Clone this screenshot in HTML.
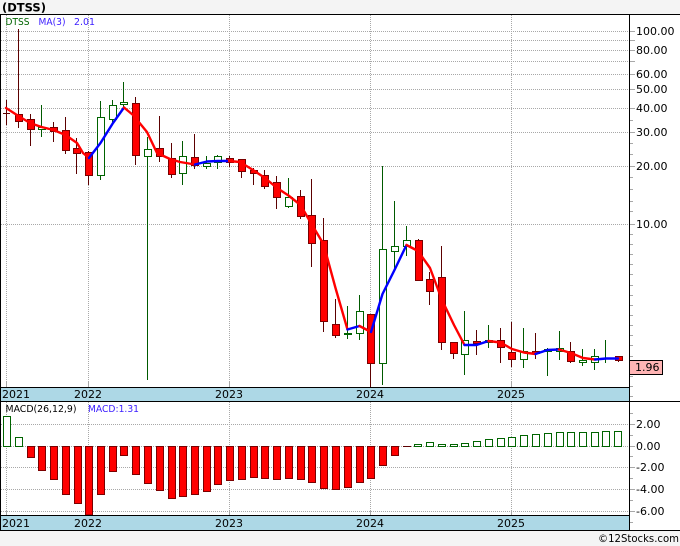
<!DOCTYPE html>
<html>
<head>
<meta charset="utf-8">
<style>
html,body{margin:0;padding:0;background:#f4f4f4;width:680px;height:546px;overflow:hidden}
svg{display:block}
text{font-family:"DejaVu Sans",sans-serif;font-size:11px;fill:#000}
.s{font-size:9.5px}
</style>
</head>
<body>
<svg width="680" height="546" viewBox="0 0 680 546" xmlns="http://www.w3.org/2000/svg">
<rect x="0" y="0" width="680" height="546" fill="#f4f4f4"/>
<rect x="0" y="14" width="680" height="516" fill="#fff"/>

<!-- grid -->
<g shape-rendering="crispEdges" fill="none" stroke="#a8a8a8">
<path stroke-dasharray="1 1" d="M1 31.5H630M1 40.5H630M1 50.5H630M1 61.5H630M1 74.5H630M1 89.5H630M1 108.5H630M1 132.5H630M1 166.5H630M1 224.5H630"/>
<path stroke-dasharray="1 1" d="M6.5 15V382M88.5 15V382M229.5 15V382M370.5 15V382M511.5 15V382"/>
<path stroke-dasharray="1 1" d="M1 424.5H630M1 446.5H630M1 467.5H630M1 489.5H630M1 511.5H630"/>
<path stroke-dasharray="1 1" d="M6.5 402V511M88.5 402V511M229.5 402V511M370.5 402V511M511.5 402V511"/>
<path d="M6.5 382V387M88.5 382V387M229.5 382V387M370.5 382V387M511.5 382V387M6.5 511V515M88.5 511V515M229.5 511V515M370.5 511V515M511.5 511V515"/>
<path d="M630 31.5h5M630 40.5h5M630 50.5h5M630 61.5h5M630 74.5h5M630 89.5h5M630 108.5h5M630 132.5h5M630 166.5h5M630 224.5h5"/>
<path d="M630 120.5h3M630 143.5h3M630 154.5h3M630 177.5h3M630 189.5h3M630 201.5h3M630 211.5h3M630 234.5h3M630 244.5h3M630 254.5h3M630 264.5h3M630 274.5h3M630 285.5h3M630 295.5h3M630 305.5h3M630 315.5h3M630 325.5h3M630 335.5h3M630 345.5h3M630 356.5h3M630 376.5h3M630 386.5h3M630 396.5h3"/>
<path d="M630 424.5h5M630 446.5h5M630 467.5h5M630 489.5h5M630 511.5h5"/>
<path d="M630 413.5h3M630 435.5h3M630 456.5h3M630 478.5h3M630 500.5h3M630 522.5h3"/>
</g>

<!-- wicks -->
<path shape-rendering="crispEdges" fill="none" stroke="#5c0000" d="M6.5 100V125M3 113.5h7M18.5 29V128M30.5 114V146M53.5 122V142M65.5 117V154M76.5 138V174M88.5 151V185M135.5 97V165M159.5 116V162M171.5 143V178M194.5 134V169M229.5 156V167M241.5 159V178M253.5 168V185M264.5 170V189M276.5 176V209M300.5 190V219M311.5 179V267M323.5 218V332M335.5 299V338M370.5 314V387M418.5 239V281M429.5 272V305M441.5 246V350M453.5 342V359M476.5 330V355M500.5 328V363M511.5 322V367M535.5 333V359M570.5 342V363M618.5 356V362"/>
<path shape-rendering="crispEdges" fill="none" stroke="#005a00" d="M41.5 105V137M100.5 101V180M112.5 100V124M123.5 82V110M147.5 137V380M182.5 141V185M206.5 156V169M217.5 155V169M288.5 178V208M347.5 306V339M359.5 295V340M382.5 166V385M394.5 201V270M406.5 226V256M464.5 311V375M488.5 325V348M523.5 328V368M547.5 348V376M559.5 331V360M582.5 349V366M594.5 349V370M605.5 340V363"/>

<!-- red bodies -->
<path transform="translate(.5 0)" shape-rendering="crispEdges" fill="#f00" stroke="#7a0000" d="M15 114.5h7V121.5h-7zM27 119.5h7V129.5h-7zM50 127.5h7V131.5h-7zM62 130.5h7V150.5h-7zM73 148.5h7V153.5h-7zM85 152.5h7V175.5h-7zM132 103.5h7V155.5h-7zM156 148.5h7V156.5h-7zM168 158.5h7V174.5h-7zM191 157.5h7V165.5h-7zM226 158.5h7V162.5h-7zM238 159.5h7V171.5h-7zM250 170.5h7V173.5h-7zM261 175.5h7V186.5h-7zM273 182.5h7V197.5h-7zM297 196.5h7V216.5h-7zM308 215.5h7V243.5h-7zM320 240.5h7V321.5h-7zM332 324.5h7V335.5h-7zM367 314.5h7V363.5h-7zM415 240.5h7V280.5h-7zM426 279.5h7V291.5h-7zM438 277.5h7V342.5h-7zM450 342.5h7V353.5h-7zM473 341.5h7V343.5h-7zM497 340.5h7V347.5h-7zM508 352.5h7V359.5h-7zM532 351.5h7V353.5h-7zM567 351.5h7V361.5h-7zM615 356.5h7V360.5h-7z"/>
<!-- green bodies -->
<path transform="translate(.5 0)" shape-rendering="crispEdges" fill="#fff" stroke="#006400" d="M38 127.5h7V129.5h-7zM97 117.5h7V175.5h-7zM109 105.5h7V119.5h-7zM120 102.5h7V104.5h-7zM144 149.5h7V156.5h-7zM179 156.5h7V173.5h-7zM203 163.5h7V166.5h-7zM214 156.5h7V162.5h-7zM285 197.5h7V206.5h-7zM344 333.5h7V334.5h-7zM356 311.5h7V333.5h-7zM379 249.5h7V363.5h-7zM391 246.5h7V251.5h-7zM403 240.5h7V246.5h-7zM461 340.5h7V354.5h-7zM485 340.5h7V342.5h-7zM520 351.5h7V359.5h-7zM544 349.5h7V351.5h-7zM556 348.5h7V351.5h-7zM579 360.5h7V362.5h-7zM591 356.5h7V362.5h-7z"/>

<!-- MA line -->
<g fill="none" stroke-width="2.4" stroke-linejoin="round" stroke-linecap="round">
<polyline stroke="#f00" points="6,108 18.5,116 30,123 41.5,127 53.5,130 65.5,135 77,143 83,153 89,158"/>
<polyline stroke="#00f" points="89,158 100.5,143 113,123 124,107.5"/>
<polyline stroke="#f00" points="124,107.5 133,115 147,132 157,153 170,159 180,162 195,164.5"/>
<polyline stroke="#00f" points="195,164.5 207,161.5 218,161 229,161"/>
<polyline stroke="#f00" points="229,161 240,162 253,170 265,178 277,188 288.5,195.5 300.5,205 311.5,224 323.5,244 335.5,288 347.5,329.5"/>
<polyline stroke="#00f" points="347.5,329.5 359.5,326"/>
<polyline stroke="#f00" points="359.5,326 371,332"/>
<polyline stroke="#00f" points="371,332 382.5,294 394.5,270 406.5,245"/>
<polyline stroke="#f00" points="406.5,245 418,251 430,268 442,300 454,325 464.5,345"/>
<polyline stroke="#00f" points="464.5,345 476.5,345 488.5,341"/>
<polyline stroke="#f00" points="488.5,341 500.5,342.5 512,349 524,352.5 535.5,354"/>
<polyline stroke="#00f" points="535.5,354 547.5,350 559,349.5"/>
<polyline stroke="#f00" points="559,349.5 571,353 583,358 595,359.5"/>
<polyline stroke="#00f" points="595,359.5 606,358.5 618,358.5"/>
</g>

<!-- MACD bars -->
<path transform="translate(.5 0)" shape-rendering="crispEdges" fill="#f00" stroke="#7a0000" d="M27 446.5h7V457.5h-7zM38 446.5h7V470.5h-7zM50 446.5h7V479.5h-7zM62 446.5h7V494.5h-7zM74 446.5h7V503.5h-7zM85 446.5h7V515h-7zM97 446.5h7V494.5h-7zM109 446.5h7V471.5h-7zM120 446.5h7V455.5h-7zM132 446.5h7V474.5h-7zM144 446.5h7V483.5h-7zM156 446.5h7V490.5h-7zM168 446.5h7V498.5h-7zM179 446.5h7V496.5h-7zM191 446.5h7V494.5h-7zM203 446.5h7V491.5h-7zM214 446.5h7V484.5h-7zM226 446.5h7V480.5h-7zM238 446.5h7V479.5h-7zM250 446.5h7V477.5h-7zM261 446.5h7V478.5h-7zM273 446.5h7V479.5h-7zM285 446.5h7V478.5h-7zM297 446.5h7V479.5h-7zM308 446.5h7V482.5h-7zM320 446.5h7V488.5h-7zM332 446.5h7V489.5h-7zM344 446.5h7V487.5h-7zM356 446.5h7V482.5h-7zM367 446.5h7V478.5h-7zM379 446.5h7V465.5h-7zM391 446.5h7V455.5h-7z"/>
<path shape-rendering="crispEdges" fill="none" stroke="#5c0000" d="M403 446.5h8"/>
<path transform="translate(.5 0)" shape-rendering="crispEdges" fill="#fff" stroke="#006400" d="M3 416.5h7V446.5h-7zM15 437.5h7V446.5h-7zM414 444.5h7V446.5h-7zM426 442.5h7V446.5h-7zM438 444.5h7V446.5h-7zM450 444.5h7V446.5h-7zM461 443.5h7V446.5h-7zM473 441.5h7V446.5h-7zM485 439.5h7V446.5h-7zM497 438.5h7V446.5h-7zM508 437.5h7V446.5h-7zM520 435.5h7V446.5h-7zM532 434.5h7V446.5h-7zM544 433.5h7V446.5h-7zM556 432.5h7V446.5h-7zM567 432.5h7V446.5h-7zM579 432.5h7V446.5h-7zM591 432.5h7V446.5h-7zM602 431.5h7V446.5h-7zM614 431.5h7V446.5h-7z"/>

<!-- time bars -->
<g shape-rendering="crispEdges">
<rect x="1" y="388" width="629" height="13" fill="#add8e6"/>
<rect x="1" y="516" width="629" height="14" fill="#add8e6"/>
<rect x="0" y="387" width="630" height="1" fill="#000"/>
<rect x="0" y="515" width="630" height="1" fill="#000"/>
<rect x="0" y="401" width="680" height="1" fill="#000"/>
<rect x="0" y="530" width="680" height="1" fill="#000"/>
<rect x="0" y="14" width="680" height="1" fill="#000"/>
<rect x="0" y="14" width="1" height="517" fill="#000"/>
<rect x="629" y="14" width="1" height="517" fill="#000"/>
<rect x="629.5" y="360.5" width="33" height="14" fill="#ffb4b4" stroke="#000"/>
</g>

<!-- text -->
<text x="2" y="11.5" style="font-weight:bold;font-size:11.5px">(DTSS)</text>
<text class="s" x="5.5" y="25" textLength="24" lengthAdjust="spacingAndGlyphs" style="fill:#006400">DTSS</text>
<text class="s" x="38.5" y="25" textLength="27" lengthAdjust="spacingAndGlyphs" style="fill:#3a1cff">MA(3)</text>
<text class="s" x="74" y="25" textLength="21" lengthAdjust="spacingAndGlyphs" style="fill:#3a1cff">2.01</text>
<text class="s" x="5.5" y="412" textLength="71" lengthAdjust="spacingAndGlyphs">MACD(26,12,9)</text>
<text class="s" x="88" y="412" textLength="51" lengthAdjust="spacingAndGlyphs" style="fill:#3a1cff">MACD:1.31</text>

<text x="636" y="35">100.00</text>
<text x="636" y="54">80.00</text>
<text x="636" y="78">60.00</text>
<text x="636" y="93">50.00</text>
<text x="636" y="112">40.00</text>
<text x="636" y="136">30.00</text>
<text x="636" y="170">20.00</text>
<text x="636" y="228">10.00</text>
<text x="635" y="371">1.96</text>

<text x="636" y="428">2.00</text>
<text x="636" y="450">0.00</text>
<text x="636" y="471">-2.00</text>
<text x="636" y="493">-4.00</text>
<text x="636" y="515">-6.00</text>

<text x="2" y="398">2021</text>
<text x="74" y="398">2022</text>
<text x="215" y="398">2023</text>
<text x="356" y="398">2024</text>
<text x="497" y="398">2025</text>
<text x="2" y="527">2021</text>
<text x="74" y="527">2022</text>
<text x="215" y="527">2023</text>
<text x="356" y="527">2024</text>
<text x="497" y="527">2025</text>

<text x="598" y="542" textLength="81" lengthAdjust="spacingAndGlyphs">©12Stocks.com</text>
</svg>
</body>
</html>
